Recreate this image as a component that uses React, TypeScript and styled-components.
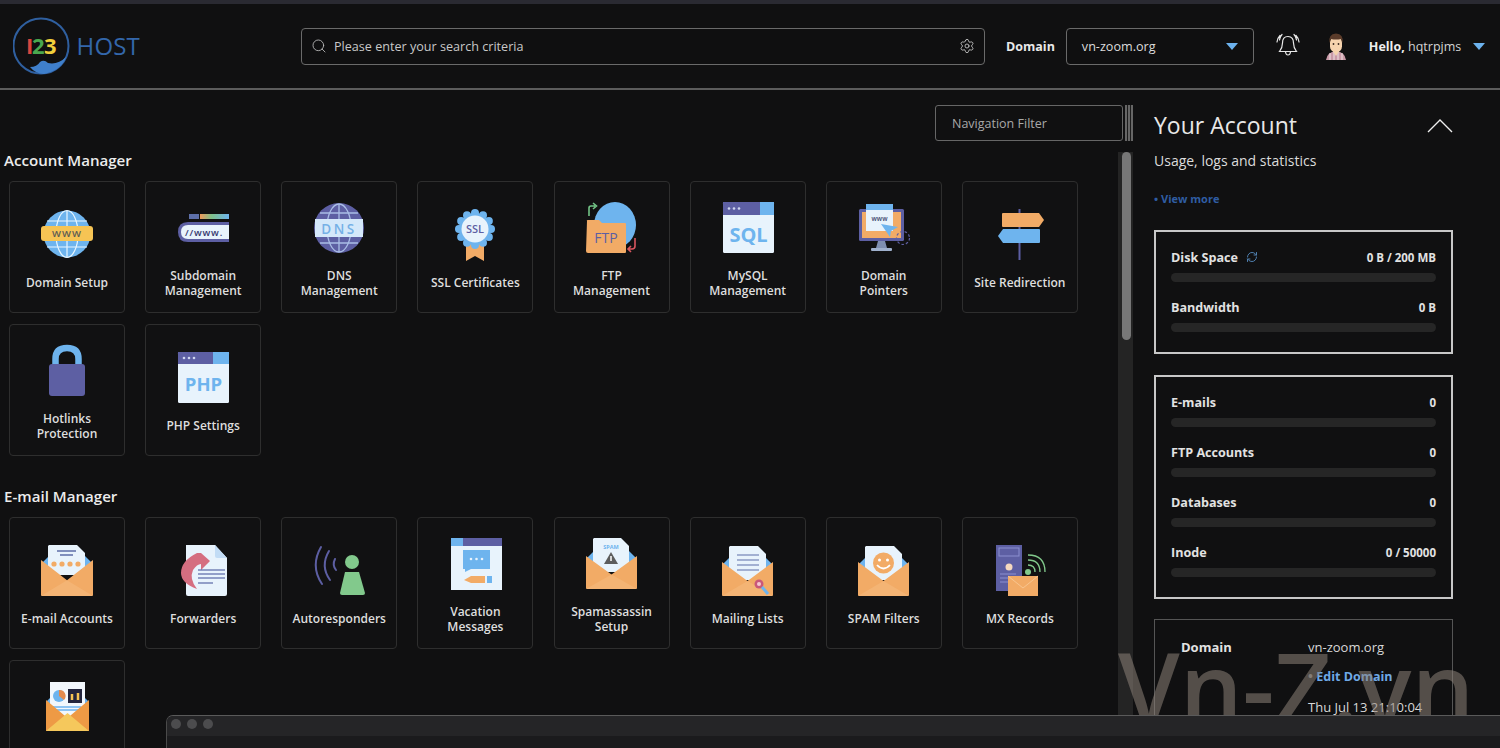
import React from "react";
import styled, { createGlobalStyle } from "styled-components";
import { Search, Settings, RefreshCw } from "lucide-react";

const Global = createGlobalStyle`
  html, body { margin: 0; padding: 0; height: 100%; background: #101011; overflow: hidden; }
  body { font-family: "Open Sans", "Liberation Sans", sans-serif; color: #e4e4e4; }
  * { box-sizing: border-box; }
`;

const Page = styled.div`
  position: relative; width: 1500px; height: 748px; overflow: hidden;
  display: flex; flex-direction: column; background: #101011;
`;
const TopStrip = styled.div`height: 4px; background: #2a2a32; flex: none;`;
const Header = styled.header`
  height: 86px; flex: none; display: flex; align-items: center; padding: 0 0 0 13px;
  border-bottom: 2px solid #5c5c5c;
`;
const LogoWrap = styled.div`width: 288px; flex: none; display: flex; align-items: center;`;
const Field = styled.div<{ $w: number }>`
  width: ${p => p.$w}px; height: 37px; flex: none; display: flex; align-items: center;
  border: 1px solid #6a6a6a; border-radius: 4px; background: #0f0f10; font-size: 12.6px; color: #d8d8d8;
`;
const SearchText = styled.span`flex: 1; margin-left: 7px; color: #c8c8c8;`;
const HeadLabel = styled.span`font-size: 12.5px; font-weight: 700; color: #e8e8e8; margin: 0 11px 0 21px;`;
const SelectText = styled.span`flex: 1; padding-left: 15px; color: #dcdcdc;`;
const Caret = styled.span<{ $mr?: number }>`
  width: 0; height: 0; flex: none; border-left: 6px solid transparent; border-right: 6px solid transparent;
  border-top: 7px solid #6cb2ee; margin-right: ${p => p.$mr ?? 0}px;
`;
const BellSlot = styled.div`margin-left: 21px; width: 26px; height: 26px; flex: none;`;
const AvatarSlot = styled.div`margin-left: 23px; width: 24px; height: 28px; flex: none;`;
const Hello = styled.div`margin-left: 21px; font-size: 12.5px; color: #d4d4d4; width: 104px; flex: none; white-space: nowrap;`;
const HelloStrong = styled.b`font-weight: 700; color: #eee;`;

const Body = styled.div`flex: 1; display: flex; min-height: 0;`;
const Main = styled.main`width: 1133px; flex: none; display: flex; flex-direction: column; min-height: 0;`;
const FilterRow = styled.div`flex: none; display: flex; justify-content: flex-end; align-items: stretch; padding-top: 15px; height: 51px; margin-bottom: 8px;`;
const FilterInput = styled.div`
  width: 188px; border: 1px solid #666; border-radius: 3px; display: flex; align-items: center;
  padding-left: 16px; font-size: 12.5px; color: #a8a8a8;
`;
const Splitter = styled.div`
  width: 8px; margin-left: 2px;
  background: repeating-linear-gradient(90deg, #666 0 2px, #1c1c1c 2px 3px);
`;
const Content = styled.div`flex: 1; display: flex; min-height: 0;`;
const Scroll = styled.div`flex: 1; overflow: hidden; padding: 3px 0 0 4px;`;
const Track = styled.div`width: 15px; flex: none; margin-top: 3px; background: #242424; padding: 0 2px 0 4px;`;
const Thumb = styled.div`height: 188px; background: #777; border-radius: 5px;`;
const SectionTitle = styled.h2<{ $first?: boolean }>`
  margin: ${p => (p.$first ? 0 : "32px")} 0 12px 0; font-size: 15.1px; line-height: 17px; font-weight: 600; color: #ececec;
`;
const Grid = styled.div`display: grid; grid-template-columns: repeat(8, 116px); gap: 11px 20.14px; padding-left: 5px;`;
const Card = styled.div`
  width: 116px; height: 132px; border: 1px solid #2e2e2e; border-radius: 4px; background: #111112;
  display: flex; flex-direction: column; align-items: center; padding-top: 19px;
`;
const IconBox = styled.div`width: 60px; height: 60px; flex: none;`;
const CardLabel = styled.div`
  margin-top: 6.5px; height: 30px; display: flex; align-items: center; justify-content: center; text-align: center;
  font-size: 12px; line-height: 15px; font-weight: 600; color: #dedede; padding: 0 2px;
`;

const Aside = styled.aside`width: 367px; flex: none; padding: 19px 47px 0 21px;`;
const AsideHead = styled.div`display: flex; justify-content: space-between; align-items: center; height: 32px;`;
const AsideTitle = styled.h1`margin: 0; font-size: 23px; line-height: 32px; font-weight: 400; color: #e8e8e8;`;
const Usage = styled.div`margin-top: 10px; font-size: 14px; line-height: 20px; color: #dcdcdc;`;
const ViewMore = styled.div`margin-top: 20px; font-size: 11px; line-height: 16px; font-weight: 700; color: #2f5da3;`;
const StatBox = styled.section<{ $mt: number }>`
  margin-top: ${p => p.$mt}px; border: 2px solid #c8c8c8; padding: 16px 15px 20px; display: flex; flex-direction: column; gap: 16px;
`;
const Stat = styled.div``;
const StatHead = styled.div`
  display: flex; justify-content: space-between; align-items: center; height: 18px; font-size: 11.5px; font-weight: 700; color: #e2e2e2;
`;
const StatName = styled.span`display: flex; align-items: center; gap: 8px; font-size: 12.6px; font-weight: 700;`;
const Bar = styled.div`margin-top: 7px; height: 9px; border-radius: 5px; background: #262626;`;
const DomainBox = styled.section`
  margin-top: 20px; border: 1px solid #555; padding: 17px 0 0 26px; display: flex; flex-direction: column;
`;
const InfoRow = styled.div<{ $h: number }>`display: flex; align-items: center; min-height: ${p => p.$h}px; font-size: 13px;`;
const InfoLabel = styled.div<{ $drop?: number }>`width: 127px; font-weight: 700; color: #e2e2e2; margin-top: ${p => p.$drop ?? 0}px;`;
const InfoValue = styled.div`color: #d8d8d8; line-height: 18px;`;
const EditLink = styled.span`color: #6fa9e6; font-weight: 700; font-size: 12.5px;`;
const EditDot = styled.span`color: #777; font-weight: 700;`;
const Watermark = styled.div`
  position: absolute; left: 1118px; top: 627px; font-size: 99px; font-weight: 600; line-height: 120px; white-space: nowrap;
  color: rgba(140, 130, 120, 0.55); pointer-events: none; z-index: 1;
`;
const MacWindow = styled.div`
  position: absolute; left: 166px; right: 0; bottom: 0; height: 33px; z-index: 2; background: #1b1b1d;
  border-top: 1px solid #5a5a5a; border-left: 1px solid #4a4a4a; border-top-left-radius: 7px; overflow: hidden;
`;
const MacBar = styled.div`height: 20px; background: #252527; display: flex; align-items: flex-start; gap: 6px; padding: 3px 0 0 4px;`;
const MacDot = styled.span`width: 10px; height: 10px; border-radius: 50%; background: #4c4c4e;`;

const Ic: React.FC<{ children: React.ReactNode }> = ({ children }) => (
  <svg width="60" height="60" viewBox="0 0 60 60" fontFamily="'Open Sans', sans-serif">{children}</svg>
);
const BLUE = "#6eb4ee", PUR = "#5d5fa3", ORG = "#f2ab66", PALE = "#e8f3fc";

const Paper: React.FC<{ x: number; y: number; w: number; h: number }> = ({ x, y, w, h }) => (
  <path d={`M${x + 1} ${y}H${x + w - 8}L${x + w} ${y + 8}V${y + h}H${x}V${y + 1}Z`} fill={PALE} />
);
const EnvBack: React.FC<{ x: number; y: number; w: number; h: number }> = ({ x, y, w }) => (
  <path d={`M${x} ${y + 8}L${x + 8} ${y}H${x + w - 8}L${x + w} ${y + 8}V${y + 16}H${x}Z`} fill={BLUE} />
);
const EnvFront: React.FC<{ x: number; y: number; w: number; h: number; c?: string }> = ({ x, y, w, h, c = ORG }) => (
  <>
    <path d={`M${x} ${y}L${x + w / 2} ${y + h * 0.56}L${x + w} ${y}V${y + h - 1}Q${x + w} ${y + h} ${x + w - 1} ${y + h}H${x + 1}Q${x} ${y + h} ${x} ${y + h - 1}Z`} fill={c} />
    <path d={`M${x} ${y + h}L${x + w / 2} ${y + h * 0.56}L${x + w} ${y + h}Z`} fill="#f6bb80" opacity=".55" />
  </>
);

const icons: Record<string, React.ReactNode> = {
  domain: <Ic>
    <circle cx="30" cy="33" r="23.5" fill={BLUE} />
    <g fill="none" stroke="#e8f6ff" strokeWidth="1.2">
      <ellipse cx="30" cy="33" rx="11" ry="23.5" /><path d="M30 9.5V56M10 20H50M10 46H50" />
    </g>
    <rect x="4" y="25" width="52" height="15" rx="3" fill="#f6c454" />
    <text x="30" y="36" fontSize="9.5" fontWeight="600" fill="#5b5a55" textAnchor="middle" letterSpacing="1">WWW</text>
  </Ic>,
  sub: <Ic>
    <path d="M16 13h10v5H16z" fill="#5d6fa8" />
    <defs><linearGradient id="gb" x1="0" x2="1"><stop offset="0" stopColor="#ef9a5a" /><stop offset=".4" stopColor="#7fc08a" /><stop offset="1" stopColor={BLUE} /></linearGradient></defs>
    <rect x="27" y="13" width="29" height="5" fill="url(#gb)" />
    <path d="M56 21H15Q5 21 5 31T15 41H56Z" fill={PUR} />
    <path d="M56 24H15Q8 24 8 31T15 38H56Z" fill={PALE} />
    <text x="12" y="34.5" fontSize="9.5" fontWeight="600" fill="#34376e" letterSpacing=".8">//www.</text>
  </Ic>,
  dns: <Ic>
    <circle cx="30" cy="27" r="25" fill={PUR} />
    <g fill="none" stroke="#a9bde6" strokeWidth="1.3">
      <ellipse cx="30" cy="27" rx="12" ry="24" /><path d="M30 3V51M11 12H49M11 42H49" />
    </g>
    <rect x="6" y="18" width="48" height="18" fill="#d4e8fa" />
    <text x="30" y="32.5" fontSize="13.5" fontWeight="600" fill="#75b0e6" textAnchor="middle" letterSpacing="2.5">DNS</text>
  </Ic>,
  ssl: <Ic>
    <path d="M21 42H39V60L30 55L21 60Z" fill={ORG} />
    <g fill={BLUE}>
      {[0, 30, 60, 90, 120, 150, 180, 210, 240, 270, 300, 330].map(a => (
        <circle key={a} cx={30 + 16 * Math.cos((a * Math.PI) / 180)} cy={28 + 16 * Math.sin((a * Math.PI) / 180)} r="4" />
      ))}
      <circle cx="30" cy="28" r="16" />
    </g>
    <circle cx="30" cy="28" r="13.5" fill={PALE} />
    <text x="30" y="32" fontSize="11" fontWeight="600" fill={PUR} textAnchor="middle">SSL</text>
  </Ic>,
  ftp: <Ic>
    <ellipse cx="33" cy="24" rx="21" ry="23" fill={BLUE} />
    <path d="M5 20Q4 19 6 19H17L20 22H43Q44 22 44 23V51Q44 52 43 52H6Q4 52 4 50Z" fill={ORG} />
    <text x="24" y="42" fontSize="14" fill={PUR} textAnchor="middle">FTP</text>
    <path d="M7 15V7Q7 5 9 5H13M11 2L14.5 5L11 8" fill="none" stroke="#72c486" strokeWidth="1.6" />
    <path d="M53 37V45Q53 48 50 48H46M49 45L46 48L49 51" fill="none" stroke="#d9565f" strokeWidth="1.6" />
  </Ic>,
  sql: <Ic>
    <rect x="5" y="1" width="51" height="51" rx="1.5" fill={PALE} />
    <rect x="5" y="1" width="37" height="13" fill={PUR} /><rect x="42" y="1" width="14" height="13" fill={BLUE} />
    <g fill="#cfd6f0"><circle cx="11" cy="7.5" r="1.3" /><circle cx="16" cy="7.5" r="1.3" /><circle cx="21" cy="7.5" r="1.3" /></g>
    <text x="30.5" y="41" fontSize="20" fontWeight="700" fill={BLUE} textAnchor="middle">SQL</text>
  </Ic>,
  pointers: <Ic>
    <rect x="5" y="8" width="45" height="32" rx="1.5" fill={PUR} />
    <rect x="8" y="11" width="39" height="26" fill={ORG} />
    <path d="M24 40H31L33 47H22Z" fill="#7f8fb0" /><rect x="17" y="47" width="21" height="3" rx="1" fill="#9fb0cc" />
    <rect x="12" y="3" width="27" height="27" fill={PALE} /><rect x="12" y="3" width="27" height="6" fill={BLUE} />
    <text x="25.5" y="20" fontSize="6.5" fontWeight="600" fill="#3d4a6e" textAnchor="middle">www</text>
    <path d="M27 23L44 26L37 30L36 36Z" fill={BLUE} />
    <circle cx="49" cy="37" r="6.5" fill="none" stroke="#5d5fa3" strokeWidth="1.2" strokeDasharray="2.5 2" />
  </Ic>,
  redirect: <Ic>
    <rect x="28.5" y="8" width="2" height="51" fill={PUR} />
    <path d="M13 12H49L54 19L49 26H13Q12 26 12 25V13Q12 12 13 12Z" fill={ORG} />
    <path d="M49 28H13L8 35L13 42H49Q50 42 50 41V29Q50 28 49 28Z" fill={BLUE} />
  </Ic>,
  lock: <Ic>
    <path d="M18.5 24V15Q18.5 4 30 4T41.5 15V24" fill="none" stroke={BLUE} strokeWidth="6.5" />
    <rect x="12" y="20" width="36" height="32" rx="3" fill={PUR} />
  </Ic>,
  php: <Ic>
    <rect x="5" y="8" width="51" height="51" rx="1.5" fill={PALE} />
    <rect x="5" y="8" width="35" height="12" fill={PUR} /><rect x="40" y="8" width="16" height="12" fill={BLUE} />
    <g fill="#cfd6f0"><circle cx="11" cy="14" r="1.3" /><circle cx="16" cy="14" r="1.3" /><circle cx="21" cy="14" r="1.3" /></g>
    <text x="30.5" y="47" fontSize="18.5" fontWeight="700" fill={BLUE} textAnchor="middle">PHP</text>
  </Ic>,
  accounts: <Ic>
    <EnvBack x={4} y={19} w={52} h={20} />
    <Paper x={11} y={8} w={37} h={30} />
    <path d="M20 14H39M23 18H36" stroke="#5d6fa8" strokeWidth="1.3" />
    <g fill={ORG}><circle cx="17" cy="27" r="2.6" /><circle cx="25" cy="27" r="2.6" /><circle cx="33" cy="27" r="2.6" /><circle cx="41" cy="27" r="2.6" /></g>
    <EnvFront x={4} y={23} w={52} h={36} />
  </Ic>,
  forward: <Ic>
    <path d="M13 8H42L54 21V57Q54 59 52 59H15Q13 59 13 57Z" fill={PALE} />
    <path d="M42 8L54 21H44Q42 21 42 19Z" fill="#c2dcf5" />
    <path d="M35 16L24 16Q8 24 8 36Q8 46 24 52Q16 42 20 33Q24 27 28 27V33L37 24L28 16Z" fill="#d56e80" />
    <path d="M25 33H52M25 37H52M25 41H52M25 46H40" stroke="#3c4d94" strokeWidth="1.2" />
  </Ic>,
  auto: <Ic>
    <circle cx="43" cy="25" r="7" fill="#82c98c" />
    <path d="M36 35H50L56 56Q56 58 54 58H33Q31 58 31 56Z" fill="#82c98c" />
    <g fill="none" stroke={PUR} strokeWidth="2" strokeLinecap="round">
      <path d="M12 10Q1 29 13 47" /><path d="M20 14Q11 29 21 43" /><path d="M26 22Q23 28 27 33" />
    </g>
  </Ic>,
  vacation: <Ic>
    <rect x="6" y="1" width="51" height="52" fill={PALE} />
    <rect x="6" y="1" width="12" height="8" fill={BLUE} /><rect x="18" y="1" width="39" height="8" fill={PUR} />
    <path d="M18 13H45V32H26L20 35V32H18Z" fill={BLUE} />
    <g fill="#e8f3fc"><circle cx="26" cy="22" r="1.3" /><circle cx="31.5" cy="22" r="1.3" /><circle cx="37" cy="22" r="1.3" /></g>
    <path d="M19 43L26 39H40V46H26Z" fill={ORG} /><rect x="42" y="39" width="5" height="7" fill={BLUE} />
  </Ic>,
  spam: <Ic>
    <EnvBack x={4} y={14} w={51} h={20} />
    <Paper x={11} y={1} w={36} h={34} />
    <text x="29" y="12" fontSize="5.5" fontWeight="700" fill={BLUE} textAnchor="middle">SPAM</text>
    <path d="M29 15L36 27H22Z" fill="#5d5d5d" /><path d="M29 19V24" stroke="#fff" strokeWidth="1.5" />
    <EnvFront x={4} y={19} w={51} h={33} />
  </Ic>,
  lists: <Ic>
    <EnvBack x={4} y={20} w={51} h={20} />
    <Paper x={11} y={9} w={37} h={34} />
    <path d="M19 18H41M19 23H41M19 28H41M19 33H41" stroke="#5d6fa8" strokeWidth="1.2" />
    <EnvFront x={4} y={25} w={51} h={34} />
    <circle cx="41" cy="47" r="4.5" fill="#c9577a" /><circle cx="41" cy="47" r="2" fill="#f5c6d0" />
    <path d="M44 50L50 57" stroke={BLUE} strokeWidth="3" />
  </Ic>,
  filters: <Ic>
    <EnvBack x={4} y={20} w={51} h={20} />
    <Paper x={11} y={9} w={37} h={34} />
    <circle cx="29.5" cy="26" r="10.5" fill={ORG} />
    <circle cx="25.5" cy="23" r="1.5" fill="#fff" /><circle cx="33.5" cy="23" r="1.5" fill="#fff" />
    <path d="M23 28Q29.5 35 36 28" fill="none" stroke="#fff" strokeWidth="1.8" />
    <EnvFront x={4} y={25} w={51} h={34} />
  </Ic>,
  mx: <Ic>
    <rect x="6" y="8" width="26" height="46" fill={PUR} />
    <rect x="9" y="11" width="20" height="8" fill="none" stroke="#8c90d0" strokeWidth="1" />
    <circle cx="19" cy="30" r="3.5" fill="#f5d9bf" />
    <path d="M10 37H26M10 41H22M10 45H20" stroke="#8c90d0" strokeWidth="1" />
    <circle cx="38" cy="35" r="3" fill="#82c98c" />
    <g fill="none" stroke="#82c98c" strokeWidth="1.3"><path d="M38 28Q45 28 45 35" /><path d="M38 23Q50 23 50 35" /><path d="M38 18Q55 18 55 35" /></g>
    <rect x="18" y="39" width="30" height="20" fill={ORG} />
    <path d="M18 39L33 51L48 39" fill="none" stroke="#f8c58f" strokeWidth="1" />
  </Ic>,
  stats: <Ic>
    <EnvBack x={9} y={14} w={43} h={20} />
    <path d="M13 2H48V36H13Z" fill="#f2f7fc" />
    <circle cx="22" cy="16" r="6" fill={BLUE} /><path d="M22 10A6 6 0 0 1 27 20L22 16Z" fill="#e38a4d" />
    <rect x="31" y="9" width="14" height="14" fill="#23253d" /><path d="M35 20V14M41 20V13" stroke="#f6c454" strokeWidth="2.5" />
    <path d="M16 27H44M19 30H42" stroke={BLUE} strokeWidth="1.4" />
    <path d="M9 20L30.5 38L52 20V51H9Z" fill="#ee9a45" />
    <path d="M9 51L30.5 33L52 51Z" fill="#f5c85c" />
  </Ic>,
};

const accountItems: [string, string, string?][] = [
  ["domain", "Domain Setup"], ["sub", "Subdomain", "Management"], ["dns", "DNS", "Management"], ["ssl", "SSL Certificates"],
  ["ftp", "FTP", "Management"], ["sql", "MySQL", "Management"], ["pointers", "Domain", "Pointers"], ["redirect", "Site Redirection"],
  ["lock", "Hotlinks", "Protection"], ["php", "PHP Settings"],
];
const mailItems: [string, string, string?][] = [
  ["accounts", "E-mail Accounts"], ["forward", "Forwarders"], ["auto", "Autoresponders"], ["vacation", "Vacation", "Messages"],
  ["spam", "Spamassassin", "Setup"], ["lists", "Mailing Lists"], ["filters", "SPAM Filters"], ["mx", "MX Records"],
  ["stats", ""],
];

const Tile: React.FC<{ item: [string, string, string?] }> = ({ item: [k, a, b] }) => (
  <Card>
    <IconBox>{icons[k]}</IconBox>
    <CardLabel>{a}{b && <><br />{b}</>}</CardLabel>
  </Card>
);

const Logo = () => (
  <svg width="130" height="60" viewBox="0 0 130 60" fontFamily="'Open Sans', sans-serif">
    <circle cx="28" cy="30" r="27.5" fill="none" stroke="#2f5f9f" strokeWidth="2" />
    <path d="M17 51Q24 51 27 46Q31 43 35 47Q45 49 53 41Q49 54 31 58Q22 57.5 17 51Z" fill="#3f7fcb" />
    <text x="13" y="38" fontSize="22" fontWeight="700" fill="#d8453e" letterSpacing="-1">I</text>
    <text x="19" y="38" fontSize="22" fontWeight="700" fill="#4aa84f" letterSpacing="-1">2</text>
    <text x="31" y="38" fontSize="22" fontWeight="700" fill="#f0cf3c">3</text>
    <text x="63.5" y="39" fontSize="24" fontWeight="400" fill="#3367ab" letterSpacing=".2">HOST</text>
  </svg>
);

const Bell = () => (
  <svg width="26" height="26" viewBox="0 0 26 26" fill="none" stroke="#e8e8e8" strokeWidth="1.2" strokeLinecap="round">
    <path d="M13 3.5C9 3.5 7.5 6.5 7.5 10C7.5 14 6.5 16 4.5 18.5H21.5C19.5 16 18.5 14 18.5 10C18.5 6.5 17 3.5 13 3.5Z" />
    <path d="M10.5 19Q11 22 13 22T15.5 19" />
    <path d="M5 2.5Q2.5 5 2 9M7 1.5Q5 3.5 4.5 7M21 2.5Q23.5 5 24 9M19 1.5Q21 3.5 21.5 7" />
  </svg>
);

const Avatar = () => (
  <svg width="24" height="28" viewBox="0 0 24 28">
    <path d="M2 28Q3 20 12 19Q21 20 22 28Z" fill="#c99aa8" />
    <path d="M6 28V21M10 28V20M14 28V20M18 28V21" stroke="#f1e2e2" strokeWidth="1" />
    <path d="M8 18H16L12 24Z" fill="#f6d3ae" />
    <rect x="6" y="5" width="12" height="15" rx="5.5" fill="#f6d3ae" />
    <path d="M5.5 11Q4 2 12 1.5Q20 2 18.5 11L17 7Q12 8 7 7Z" fill="#5a3b2a" />
    <circle cx="9.5" cy="12" r=".9" fill="#3a2a20" /><circle cx="14.5" cy="12" r=".9" fill="#3a2a20" />
  </svg>
);

const Chevron = () => (
  <svg width="26" height="15" viewBox="0 0 26 15" fill="none" stroke="#eee" strokeWidth="1.4"><path d="M1 14L13 2L25 14" /></svg>
);

const StatLine: React.FC<{ name: React.ReactNode; value: string }> = ({ name, value }) => (
  <Stat>
    <StatHead><StatName>{name}</StatName><span>{value}</span></StatHead>
    <Bar />
  </Stat>
);

export default function App() {
  return (
    <Page>
      <Global />
      <TopStrip />
      <Header>
        <LogoWrap><Logo /></LogoWrap>
        <Field $w={684}>
          <Search size={16} color="#bdbdbd" strokeWidth={1.3} style={{ marginLeft: 9 }} />
          <SearchText>Please enter your search criteria</SearchText>
          <Settings size={16} color="#c8c8c8" strokeWidth={1.3} style={{ marginRight: 9 }} />
        </Field>
        <HeadLabel>Domain</HeadLabel>
        <Field $w={188}>
          <SelectText>vn-zoom.org</SelectText>
          <Caret $mr={15} />
        </Field>
        <BellSlot><Bell /></BellSlot>
        <AvatarSlot><Avatar /></AvatarSlot>
        <Hello><HelloStrong>Hello,</HelloStrong> hqtrpjms</Hello>
        <Caret />
      </Header>
      <Body>
        <Main>
          <FilterRow>
            <FilterInput>Navigation Filter</FilterInput>
            <Splitter />
          </FilterRow>
          <Content>
            <Scroll>
              <SectionTitle $first>Account Manager</SectionTitle>
              <Grid>{accountItems.map(i => <Tile key={i[0]} item={i} />)}</Grid>
              <SectionTitle>E-mail Manager</SectionTitle>
              <Grid>{mailItems.map(i => <Tile key={i[0]} item={i} />)}</Grid>
            </Scroll>
            <Track><Thumb /></Track>
          </Content>
        </Main>
        <Aside>
          <AsideHead><AsideTitle>Your Account</AsideTitle><Chevron /></AsideHead>
          <Usage>Usage, logs and statistics</Usage>
          <ViewMore>• View more</ViewMore>
          <StatBox $mt={23}>
            <StatLine name={<>Disk Space <RefreshCw size={12} color="#4f7fae" /></>} value="0 B / 200 MB" />
            <StatLine name="Bandwidth" value="0 B" />
          </StatBox>
          <StatBox $mt={21}>
            <StatLine name="E-mails" value="0" />
            <StatLine name="FTP Accounts" value="0" />
            <StatLine name="Databases" value="0" />
            <StatLine name="Inode" value="0 / 50000" />
          </StatBox>
          <DomainBox>
            <InfoRow $h={20}><InfoLabel>Domain</InfoLabel><InfoValue>vn-zoom.org</InfoValue></InfoRow>
            <InfoRow $h={39}><InfoLabel /><InfoValue><EditDot>•</EditDot> <EditLink>Edit Domain</EditLink></InfoValue></InfoRow>
            <InfoRow $h={40}><InfoLabel $drop={14}>Last login</InfoLabel><InfoValue>Thu Jul 13 21:10:04<br />2023</InfoValue></InfoRow>
          </DomainBox>
        </Aside>
      </Body>
      <Watermark>Vn-Z.vn</Watermark>
      <MacWindow>
        <MacBar><MacDot /><MacDot /><MacDot /></MacBar>
      </MacWindow>
    </Page>
  );
}
